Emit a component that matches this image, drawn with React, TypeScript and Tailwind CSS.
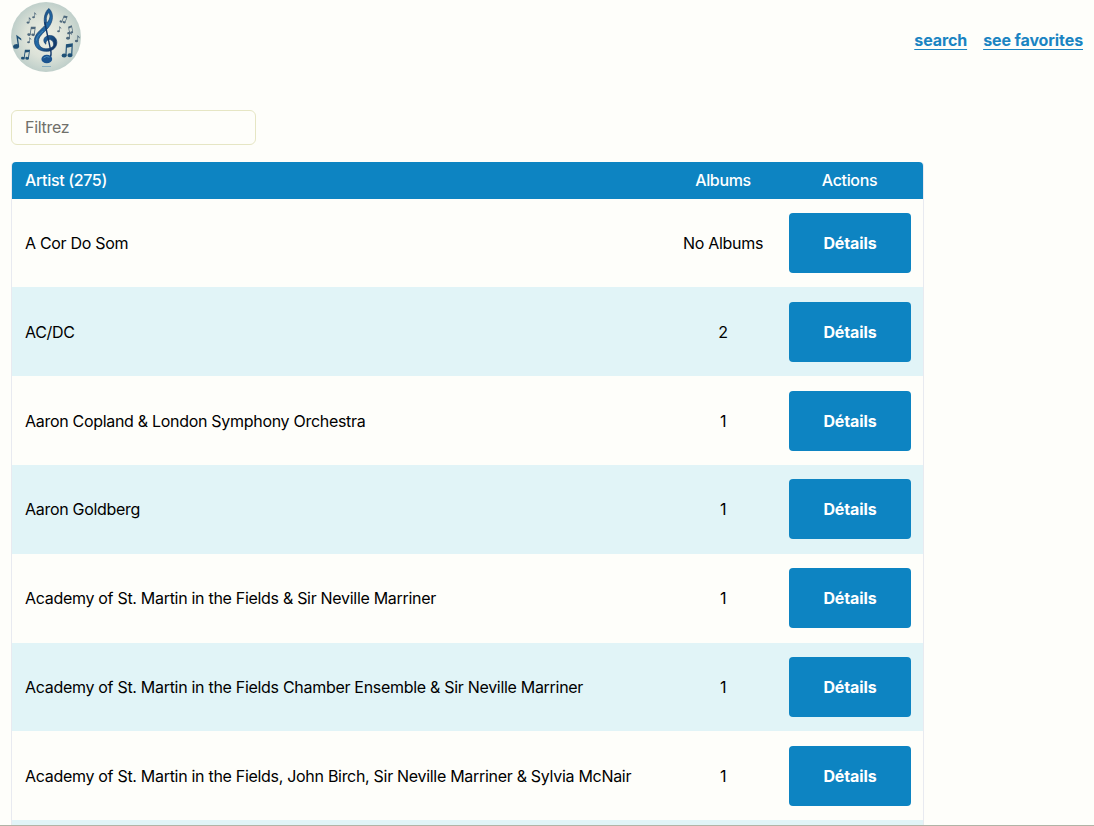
type Artist = { name: string; albums: string };

const artists: Artist[] = [
  { name: "A Cor Do Som", albums: "No Albums" },
  { name: "AC/DC", albums: "2" },
  { name: "Aaron Copland & London Symphony Orchestra", albums: "1" },
  { name: "Aaron Goldberg", albums: "1" },
  { name: "Academy of St. Martin in the Fields & Sir Neville Marriner", albums: "1" },
  { name: "Academy of St. Martin in the Fields Chamber Ensemble & Sir Neville Marriner", albums: "1" },
  { name: "Academy of St. Martin in the Fields, John Birch, Sir Neville Marriner & Sylvia McNair", albums: "1" },
];

function Note({ x, y, s = 1, r = 0 }: { x: number; y: number; s?: number; r?: number }) {
  return (
    <g transform={`translate(${x} ${y}) rotate(${r}) scale(${s})`}>
      <ellipse cx="0" cy="8" rx="2.1" ry="1.6" />
      <path d="M1.2 8V0l3 3v1.5L2.1 2.6V8z" />
    </g>
  );
}

function Beamed({ x, y, s = 1, r = 0 }: { x: number; y: number; s?: number; r?: number }) {
  return (
    <g transform={`translate(${x} ${y}) rotate(${r}) scale(${s})`}>
      <ellipse cx="-1" cy="11" rx="2.2" ry="1.7" />
      <ellipse cx="4" cy="10.5" rx="2.2" ry="1.7" />
      <path d="M0 11V1l6-1v10.5H5V3L1 4v7z" />
    </g>
  );
}

function Logo() {
  return (
    <svg viewBox="0 0 70 70" className="size-[70px]" aria-hidden="true">
      <defs>
        <radialGradient id="disc">
          <stop offset="0" stopColor="#eeefe4" />
          <stop offset="0.6" stopColor="#dce2d8" />
          <stop offset="1" stopColor="#bfcfca" />
        </radialGradient>
        <linearGradient id="clef" x1="0" y1="0" x2="1" y2="1">
          <stop offset="0" stopColor="#163a66" />
          <stop offset="0.5" stopColor="#236ba8" />
          <stop offset="1" stopColor="#0e2a55" />
        </linearGradient>
      </defs>
      <circle cx="35" cy="35" r="35" fill="url(#disc)" />
      <g fill="#4e687c">
        <Note x={17} y={15} s={0.7} />
        <Note x={22.5} y={10} s={0.65} />
        <Beamed x={20} y={24} s={0.8} r={8} />
        <Note x={17.5} y={35} s={0.65} />
        <Beamed x={53} y={13} s={0.65} r={20} />
        <Note x={47.5} y={24} s={0.65} />
        <Beamed x={57} y={24} s={0.65} r={-10} />
        <Note x={57} y={29} s={0.9} />
        <Note x={65.5} y={33} s={0.75} />
      </g>
      <g fill="#1f5076">
        <Note x={3.5} y={33} s={1.45} r={-8} />
        <Beamed x={14} y={47} s={0.85} r={8} />
        <Beamed x={55} y={41} s={1.15} r={3} />
      </g>
      <path
        fill="url(#clef)"
        stroke="#153f70"
        strokeWidth=".7"
        fillRule="evenodd"
        d="M38 6.5C43 11.5 42.4 19.5 37 26C32 31.5 27.3 34.5 27.5 39.5C27.7 44.5 31 47 36 46.8C42 46.5 44 43 41.8 39.5C39.5 36 34.5 37.2 34.8 42.2C31.8 40 31.8 34.5 38 33.5C43 33 46 36.5 45.8 41C45.5 46 40.5 49.8 34.5 49.3C27.5 49 23.3 44.8 23.4 38.5C23.6 31.5 30.5 27.5 34 23.5C32.2 18 33.5 9.5 38 6.5ZM38 10.5C35.2 13 34.8 17 35.8 21C38.7 18 40 14 38 10.5Z"
      />
      <path d="M33.8 20c1.5 8 3.5 17 6.2 30 .4 4-1 6.5-3.5 7" fill="none" stroke="#12386a" strokeWidth="1.4" />
      <ellipse cx="35.8" cy="57" rx="5.4" ry="4.3" fill="#1d5590" />
      <path d="M32.5 56q3-2.6 6-.8" fill="none" stroke="#5b9ac5" strokeWidth=".8" />
      <path d="M25.5 38.5c0-4 3.5-7 6.5-9.5" fill="none" stroke="#4b91c4" strokeWidth=".8" />
      <path d="M31 64.5h9" stroke="#6f9cb8" strokeWidth=".7" />
    </svg>
  );
}

export default function App() {
  return (
    <div className="h-[826px] overflow-hidden border-b border-[#b1b4a6] bg-[#fefefa] font-[Inter,sans-serif] text-base tracking-[-0.3px] text-black">
      <header className="flex h-[72px] items-start justify-between px-[11px] pt-[2px]">
        <Logo />
        <nav className="flex gap-4 pt-[26px] font-bold tracking-[-0.1px] text-[#1a84c2]">
          <a href="#search" className="underline underline-offset-[3px]">search</a>
          <a href="#favorites" className="underline underline-offset-[3px]">see favorites</a>
        </nav>
      </header>

      <main className="pt-[38px] pl-[11px]">
        <input
          type="text"
          placeholder="Filtrez"
          className="block h-[35px] w-[245px] rounded-md border border-[#e6e6c4] px-[13px] pb-[2px] placeholder:text-[#70706a]"
        />

        <div className="mt-[17px] w-[913px] rounded-t border-x border-[#e8eaf0]">
          <div className="grid h-[36.6px] grid-cols-[633px_131px_1fr] items-center rounded-t bg-[#0d84c2] pb-[1.6px] pl-[13px] font-medium tracking-[-0.35px] text-white">
            <span>Artist (275)</span>
            <span className="pr-px text-center">Albums</span>
            <span className="pr-[13px] text-center">Actions</span>
          </div>
          {artists.map((artist) => (
            <div
              key={artist.name}
              className="grid h-[88.8px] grid-cols-[633px_131px_1fr] items-center pl-[13px] odd:bg-[#e1f4f7]"
            >
              <span>{artist.name}</span>
              <span className="pr-px text-center">{artist.albums}</span>
              <button type="button" className="h-[60px] w-[122px] rounded bg-[#0d84c2] text-center font-bold tracking-[-0.1px] text-white">
                Détails
              </button>
            </div>
          ))}
          <div className="h-5 bg-[#e1f4f7]" />
        </div>
      </main>
    </div>
  );
}
